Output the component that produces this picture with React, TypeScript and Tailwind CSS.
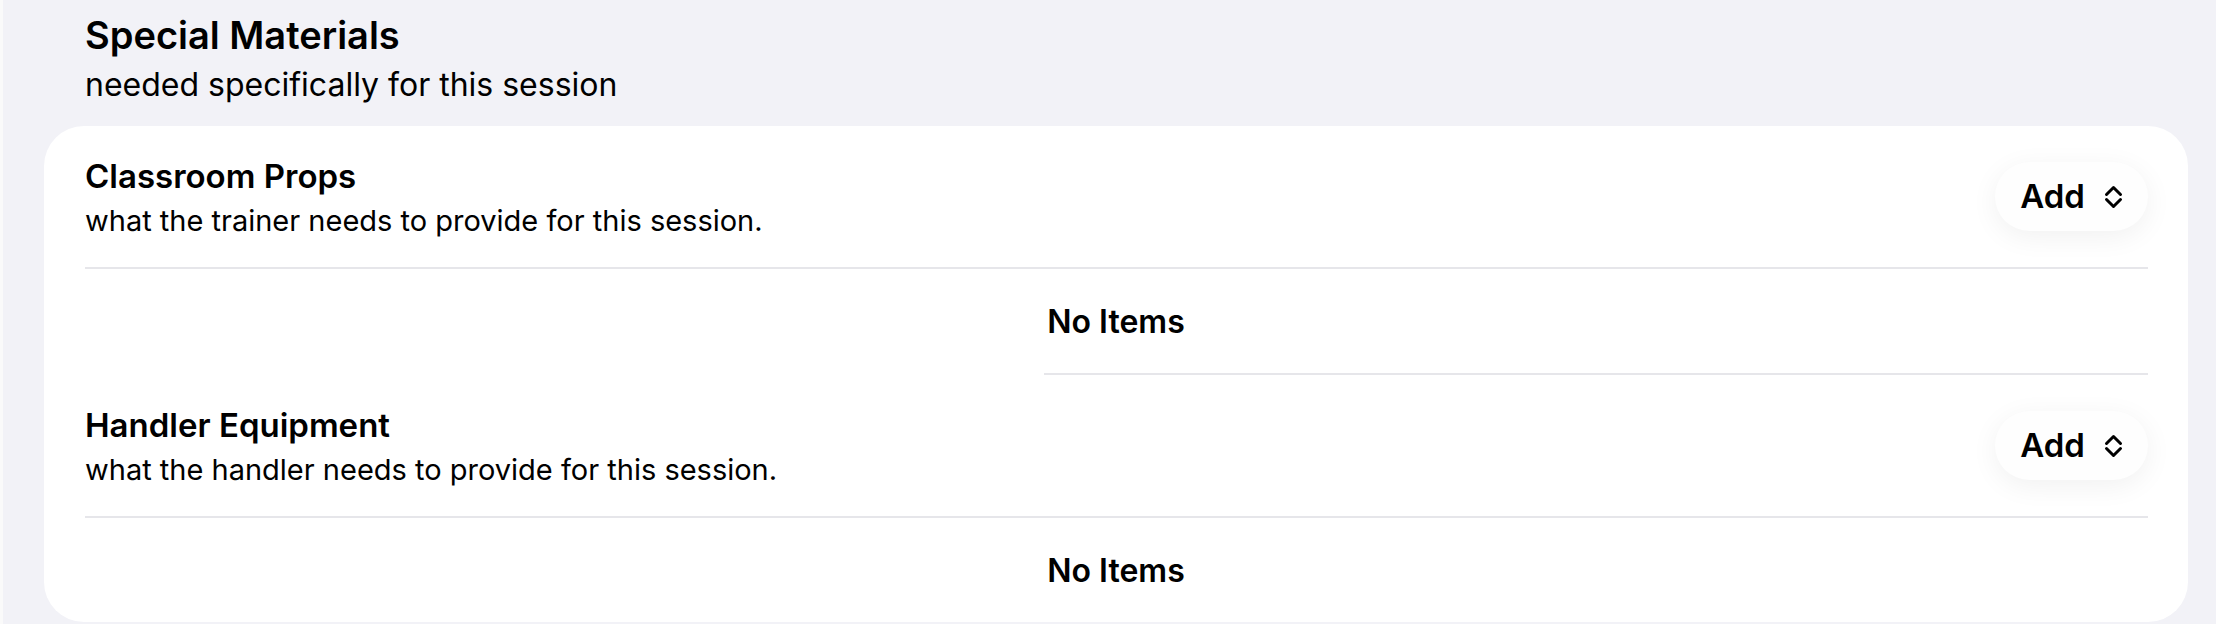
import React from 'react';

const font = { fontFamily: 'Inter, "Liberation Sans", sans-serif' };

const UpDown: React.FC = () => (
  <svg width="19" height="24" viewBox="0 0 19 24" fill="none" stroke="currentColor" strokeWidth={3} strokeLinecap="round" strokeLinejoin="round">
    <path d="M2.5 9.5 L9.5 2.5 L16.5 9.5" />
    <path d="M2.5 14.5 L9.5 21.5 L16.5 14.5" />
  </svg>
);

const AddButton: React.FC = () => (
  <button className="flex h-[69px] w-[153px] items-center justify-center gap-[19px] rounded-full bg-[#fefefe] text-[33px] font-semibold text-black shadow-[0_6px_28px_rgba(0,0,0,0.06)]">
    <span>Add</span>
    <UpDown />
  </button>
);

interface GroupProps {
  title: string;
  subtitle: string;
  last?: boolean;
}

const Group: React.FC<GroupProps> = ({ title, subtitle, last }) => (
  <>
    <div className="flex h-[141px] items-center justify-between pl-[41px] pr-[40px]">
      <div className="flex flex-col pt-[4px]">
        <div className="text-[33px] font-semibold leading-[44px] text-black">{title}</div>
        <div className="text-[29px] leading-[46px] text-black">{subtitle}</div>
      </div>
      <AddButton />
    </div>
    <div className="mx-[40px] ml-[41px] h-[2px] bg-[#e6e6ea]" />
    {/* empty list state */}
    <div className="flex h-[104px] items-center justify-center pt-[2px] text-[32px] font-semibold text-black">
      No Items
    </div>
    {!last && <div className="ml-[1000px] mr-[40px] h-[2px] bg-[#e6e6ea]" />}
  </>
);

export default function App() {
  return (
    <div className="h-[624px] w-[2216px] border-l-[3px] border-[#fafafa] bg-[#f2f2f7] pl-[41px] pr-[28px]" style={font}>
      <div className="pl-[41px] pt-[10px]">
        <div className="text-[38px] font-semibold leading-[50px] text-black">Special Materials</div>
        <div className="text-[32px] leading-[50px] text-black">needed specifically for this session</div>
      </div>
      <div className="mt-[16px] overflow-hidden rounded-[40px] bg-white">
        <Group title="Classroom Props" subtitle="what the trainer needs to provide for this session." />
        <Group title="Handler Equipment" subtitle="what the handler needs to provide for this session." last />
      </div>
    </div>
  );
}
